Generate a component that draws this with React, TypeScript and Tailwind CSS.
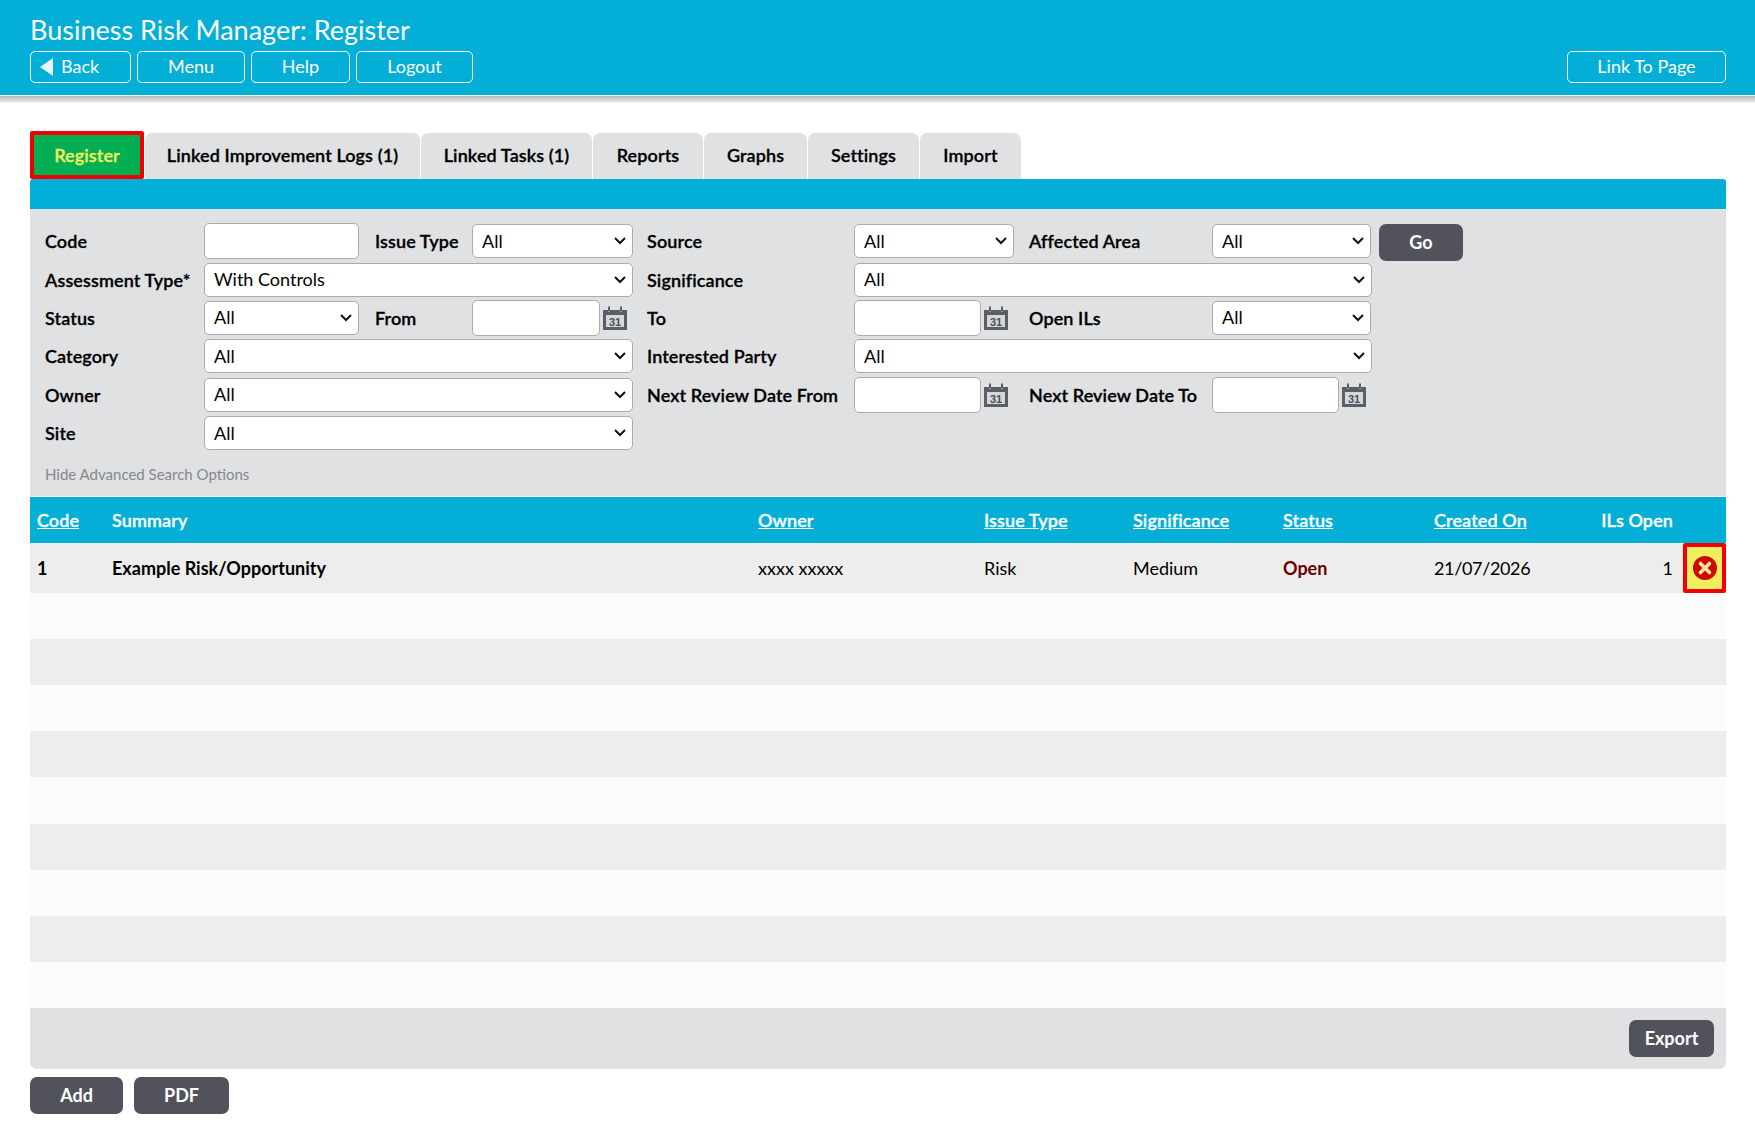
import React from "react";

const tabs = ["Linked Improvement Logs (1)", "Linked Tasks (1)", "Reports", "Graphs", "Settings", "Import"];
const tabWidths = ["w-[275px]", "w-[171px]", "w-[110px]", "w-[103px]", "w-[111px]", "w-[101px]"];

function Calendar() {
  return (
    <svg width="24" height="24" viewBox="0 0 24 24" className="ml-[3px] shrink-0">
      <path d="M0 4h5v2h2V4h10v2h2V4h5v20H0z" fill="#5a5e66" />
      <rect x="5" y="0.5" width="2" height="5" fill="#5a5e66" />
      <rect x="17" y="0.5" width="2" height="5" fill="#5a5e66" />
      <rect x="3" y="9" width="18" height="12" fill="#d5d7da" />
      <text x="12" y="19.5" textAnchor="middle" fontSize="11" fontWeight="700" fill="#4b4f57" fontFamily="Liberation Sans, sans-serif">31</text>
    </svg>
  );
}

function Field({ children }: { children: React.ReactNode }) {
  return <span className="text-[18px] font-semibold tracking-[0.1px] [-webkit-text-stroke:0.3px_black] text-black leading-none whitespace-nowrap">{children}</span>;
}

function Select({ value = "All", className = "" }: { value?: string; className?: string }) {
  return (
    <div className={`relative h-[34px] ${className}`}>
      <select defaultValue={value} className="appearance-none w-full h-full bg-white border border-[#a9abae] rounded-[5px] pl-[9px] text-[18px] text-black">
        <option>{value}</option>
      </select>
      <svg width="12" height="8" viewBox="0 0 12 8" className="absolute right-[7px] top-[13px] pointer-events-none">
        <path d="M1 1l5 5 5-5" fill="none" stroke="#111" strokeWidth="2" />
      </svg>
    </div>
  );
}

function DateInput({ className = "w-[127px]" }: { className?: string }) {
  return (
    <div className="flex items-center">
      <input className={`h-[36px] bg-white border border-[#a9abae] rounded-[5px] ${className}`} />
      <Calendar />
    </div>
  );
}

function HeadLink({ children }: { children: React.ReactNode }) {
  return <a className="underline">{children}</a>;
}

function OutlineButton({ children, className = "" }: { children: React.ReactNode; className?: string }) {
  return (
    <button className={`h-[32px] pb-[2px] border border-white rounded-[5px] text-white text-[18px] flex items-center justify-center ${className}`}>
      {children}
    </button>
  );
}

function DarkButton({ children, className = "" }: { children: React.ReactNode; className?: string }) {
  return (
    <button className={`h-[37px] bg-[#52525c] rounded-[7px] text-white text-[18px] font-bold flex items-center justify-center ${className}`}>
      {children}
    </button>
  );
}

export default function App() {
  return (
    <div className="min-h-[1128px] bg-white font-['Lato',sans-serif] overflow-hidden">
      {/* Header */}
      <div className="h-[95px] bg-[#03afd7] pl-[30px] pr-[29px] pt-[12px]">
        <h1 className="text-[27px] leading-[36px] text-white h-[39px]">Business Risk Manager: Register</h1>
        <div className="flex justify-between">
          <div className="flex gap-[6px]">
            <OutlineButton className="w-[101px] justify-start pl-[8px]">
              <svg width="14" height="20" viewBox="0 0 14 20" className="mr-[8px] mt-[2px]">
                <path d="M14 1v18L1 10z" fill="#e8f4f8" />
              </svg>
              Back
            </OutlineButton>
            <OutlineButton className="w-[108px]">Menu</OutlineButton>
            <OutlineButton className="w-[99px]">Help</OutlineButton>
            <OutlineButton className="w-[117px]">Logout</OutlineButton>
          </div>
          <OutlineButton className="w-[159px]">Link To Page</OutlineButton>
        </div>
      </div>
      <div className="h-[7px] mt-px bg-gradient-to-b from-[#b4b6b8] to-[#f4f4f4]" />

      <div className="ml-[30px] w-[1696px]">
        {/* Tabs */}
        <div className="flex items-end h-[48px] mt-[28px] gap-px">
          <div className="w-[114px] h-[48px] bg-[#04ae52] border-[4px] border-[#f00000] rounded-[2px] flex items-center justify-center text-[18px] font-semibold tracking-[0.1px] [-webkit-text-stroke:0.3px_#f2f25c] text-[#f2f25c]">
            Register
          </div>
          {tabs.map((t, i) => (
            <div key={t} className={`${tabWidths[i]} h-[46px] pb-[2px] bg-[#e0e1e3] rounded-t-[7px] flex items-center justify-center text-[18px] font-semibold tracking-[0.1px] [-webkit-text-stroke:0.3px_black] text-black`}>
              {t}
            </div>
          ))}
        </div>
        <div className="h-[30px] bg-[#03afd7] rounded-t-[3px]" />

        {/* Search form */}
        <div className="h-[287px] bg-[#e0e1e3] pt-[13px] pl-[15px]">
          <div className="grid grid-cols-[159px_171px_97px_175px_207px_175px_183px_167px_90px] auto-rows-[38.4px] items-center">
            <Field>Code</Field>
            <input className="h-[36px] w-[155px] bg-white border border-[#a9abae] rounded-[5px]" />
            <Field>Issue Type</Field>
            <Select className="w-[161px]" />
            <Field>Source</Field>
            <Select className="w-[160px]" />
            <Field>Affected Area</Field>
            <Select className="w-[159px]" />
            <DarkButton className="w-[84px] h-[34px] mt-[2px]">Go</DarkButton>

            <Field>Assessment Type*</Field>
            <Select value="With Controls" className="col-span-3 w-[429px]" />
            <Field>Significance</Field>
            <Select className="col-span-3 w-[518px]" />
            <div />

            <Field>Status</Field>
            <Select className="w-[155px]" />
            <Field>From</Field>
            <DateInput className="w-[128px]" />
            <Field>To</Field>
            <DateInput />
            <Field>Open ILs</Field>
            <Select className="w-[159px]" />
            <div />

            <Field>Category</Field>
            <Select className="col-span-3 w-[429px]" />
            <Field>Interested Party</Field>
            <Select className="col-span-3 w-[518px]" />
            <div />

            <Field>Owner</Field>
            <Select className="col-span-3 w-[429px]" />
            <Field>Next Review Date From</Field>
            <DateInput />
            <Field>Next Review Date To</Field>
            <DateInput />
            <div />

            <Field>Site</Field>
            <Select className="col-span-3 w-[429px]" />
          </div>
          <a className="block mt-[12px] text-[15px] leading-[20px] text-[#85888c]">Hide Advanced Search Options</a>
        </div>

        {/* Results table */}
        <table className="mt-px w-[1696px] table-fixed border-separate border-spacing-0 text-[18px] text-black">
          <colgroup>
            <col className="w-[82px]" />
            <col className="w-[646px]" />
            <col className="w-[226px]" />
            <col className="w-[149px]" />
            <col className="w-[150px]" />
            <col className="w-[151px]" />
            <col className="w-[149px]" />
            <col className="w-[100px]" />
            <col className="w-[43px]" />
          </colgroup>
          <thead>
            <tr className="h-[46px] bg-[#03afd7] text-white text-left [&>th]:font-semibold [&>th]:tracking-[0.1px] [&>th]:[-webkit-text-stroke:0.3px_white]">
              <th className="pl-[7px]"><HeadLink>Code</HeadLink></th>
              <th>Summary</th>
              <th><HeadLink>Owner</HeadLink></th>
              <th><HeadLink>Issue Type</HeadLink></th>
              <th><HeadLink>Significance</HeadLink></th>
              <th><HeadLink>Status</HeadLink></th>
              <th><HeadLink>Created On</HeadLink></th>
              <th className="text-right pr-[10px]">ILs Open</th>
              <th />
            </tr>
          </thead>
          <tbody>
            <tr className="h-[50px] bg-[#ededed]">
              <td className="pl-[7px] font-bold">1</td>
              <td className="font-bold">Example Risk/Opportunity</td>
              <td>xxxx xxxxx</td>
              <td>Risk</td>
              <td>Medium</td>
              <td className="font-bold text-[#6e0000]">Open</td>
              <td className="tracking-[-0.35px]">21/07/2026</td>
              <td className="text-right pr-[10px]">1</td>
              <td className="p-0 bg-[#eeee5e] border-[4px] border-[#f00000] rounded-[2px]">
                <svg width="24" height="24" viewBox="0 0 24 24" className="mx-auto">
                  <circle cx="12" cy="12" r="12" fill="#cc0a00" />
                  <path d="M7.5 7.5l9 9M16.5 7.5l-9 9" stroke="#f3e3a0" strokeWidth="3.6" strokeLinecap="round" />
                </svg>
              </td>
            </tr>
            {[0, 1, 2, 3, 4, 5, 6, 7, 8].map((i) => (
              <tr key={i} className={`h-[46.11px] ${i % 2 === 0 ? "bg-[#fcfcfc]" : "bg-[#ededed]"}`}>
                <td colSpan={9} />
              </tr>
            ))}
          </tbody>
        </table>

        {/* Table footer */}
        <div className="h-[61px] bg-[#e0e1e3] rounded-b-[7px] flex justify-end items-start pt-[12px] pr-[12px]">
          <DarkButton className="w-[85px] pt-px">Export</DarkButton>
        </div>

        <div className="flex gap-[11px] mt-[8px]">
          <DarkButton className="w-[93px]">Add</DarkButton>
          <DarkButton className="w-[95px]">PDF</DarkButton>
        </div>
      </div>
    </div>
  );
}
